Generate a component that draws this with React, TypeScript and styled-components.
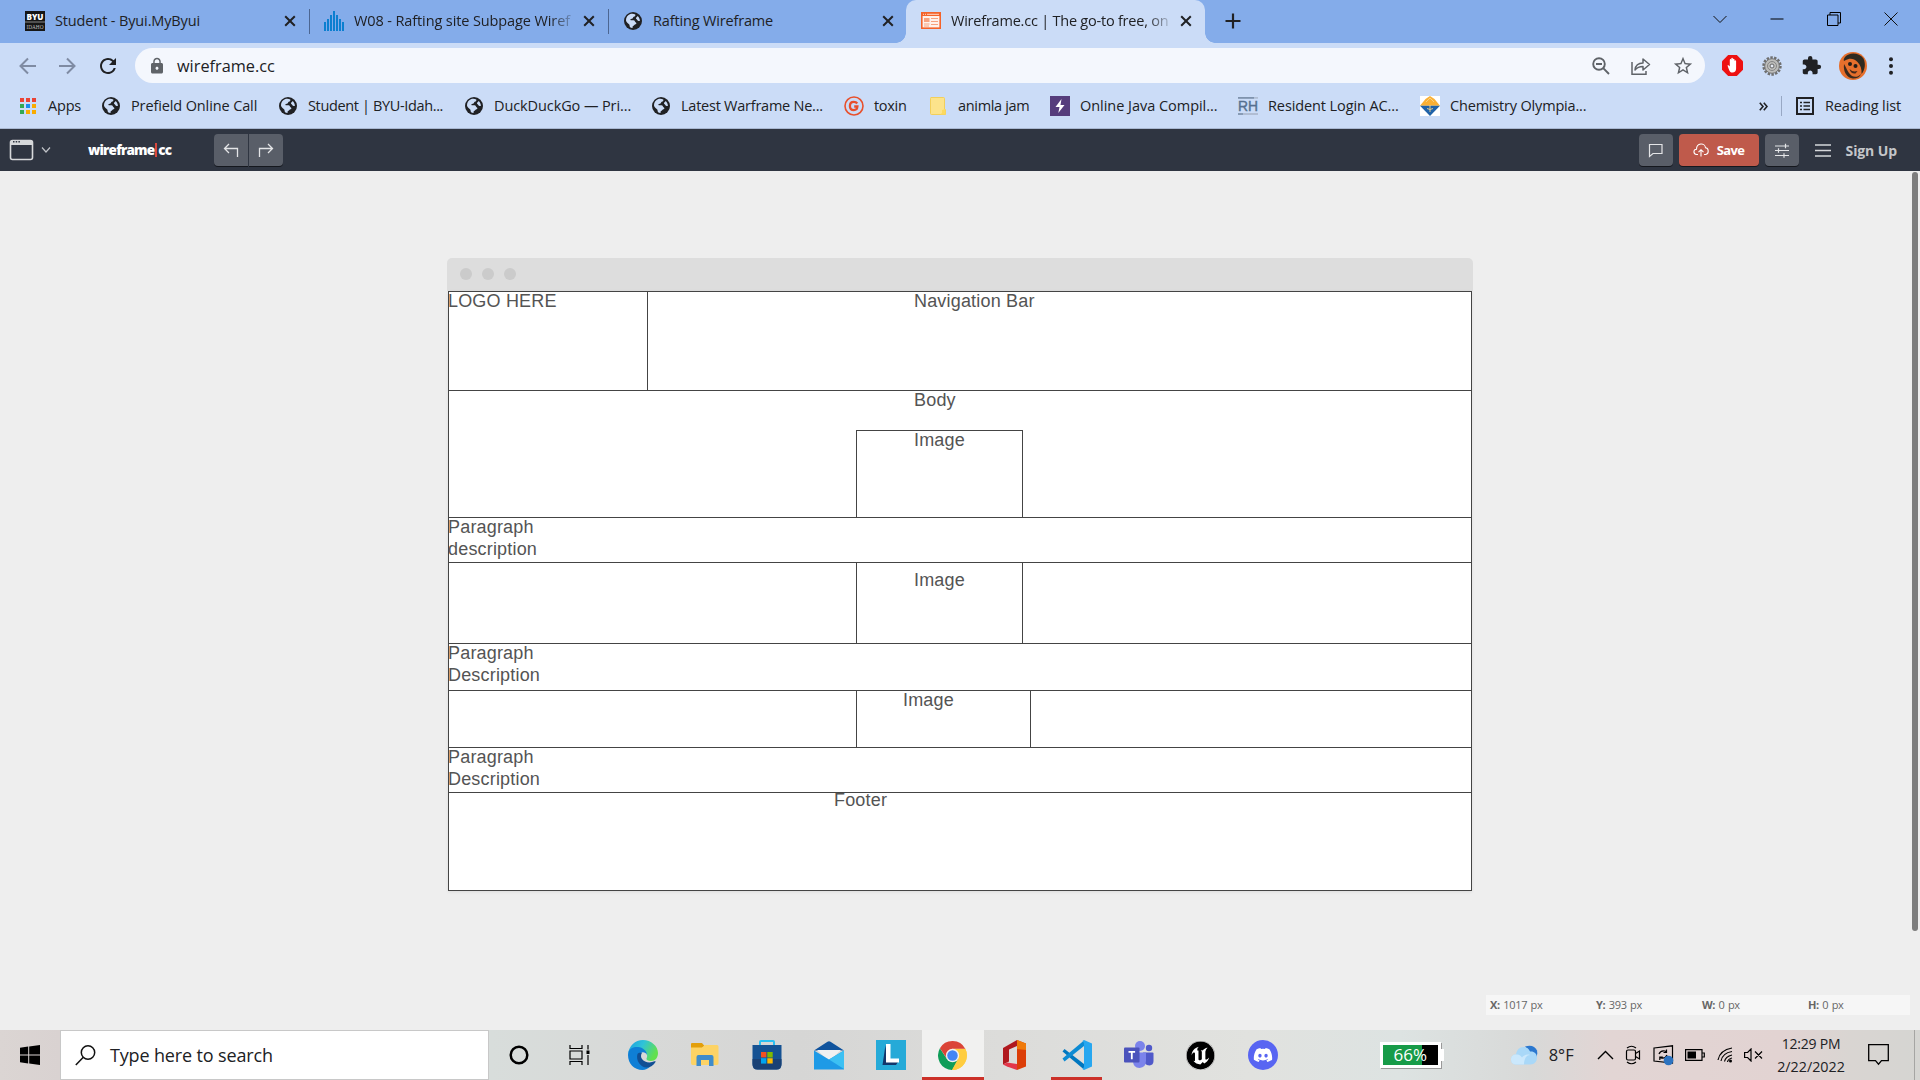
import React from "react";
import styled, { createGlobalStyle, css } from "styled-components";
import { MdLock, MdExtension, MdRefresh, MdStarBorder } from "react-icons/md";
import { SiUnrealengine } from "react-icons/si";
import { FaDiscord } from "react-icons/fa";

const uiFont = `"Open Sans", "Noto Sans", sans-serif`;
const ink = "#202124";

const GlobalStyle = createGlobalStyle`
  *, *::before, *::after { box-sizing: border-box; }
  body { margin: 0; background: #eeeeee; font-family: ${uiFont}; overflow: hidden; }
  svg { display: block; flex: none; }
`;

const Screen = styled.div`
  width: 1920px;
  height: 1080px;
  display: flex;
  flex-direction: column;
  overflow: hidden;
`;

const Label = styled.span<{ $size?: number; $track?: number }>`
  font-size: ${(p) => p.$size ?? 14.5}px;
  letter-spacing: ${(p) => p.$track ?? 0}px;
  color: ${ink};
  line-height: 20px;
  white-space: nowrap;
`;

/* ---------- Tab strip ---------- */

const TabStrip = styled.div`
  height: 43px;
  background: #84acea;
  display: flex;
  padding-left: 10px;
`;

const Tab = styled.div<{ $active?: boolean; $divider?: boolean }>`
  position: relative;
  width: 299px;
  height: 43px;
  padding: 0 12px 2px 15px;
  display: flex;
  align-items: center;
  ${(p) =>
    p.$active &&
    css`
      margin-left: -1px;
      background: #cbdcf7;
      border-radius: 10px 10px 0 0;
      &::before,
      &::after {
        content: "";
        position: absolute;
        bottom: 0;
        width: 10px;
        height: 10px;
      }
      &::before {
        left: -10px;
        background: radial-gradient(circle at 0 0, transparent 9.5px, #cbdcf7 10px);
      }
      &::after {
        right: -10px;
        background: radial-gradient(circle at 100% 0, transparent 9.5px, #cbdcf7 10px);
      }
    `}
  ${(p) =>
    p.$divider &&
    css`
      &::after {
        content: "";
        position: absolute;
        right: -1px;
        top: 9px;
        width: 1px;
        height: 25px;
        background: #4c6692;
      }
    `}
`;

const TabTitle = styled(Label)<{ $fade?: boolean }>`
  margin-left: 10px;
  width: 219px;
  ${(p) => p.$fade && css`mask-image: linear-gradient(90deg, #000 196px, rgba(0, 0, 0, 0.15) 219px);`}
`;

const TabClose = styled.div`
  margin-left: 9px;
  width: 14px;
`;

const NewTab = styled.div`
  width: 55px;
  padding: 13px 0 0 20px;
`;

const WindowControls = styled.div`
  margin-left: auto;
  display: flex;
  align-items: center;
  gap: 43px;
  padding: 0 22px 6px 0;
`;

/* ---------- Toolbar ---------- */

const Toolbar = styled.div`
  height: 45px;
  background: #cbdcf7;
  display: flex;
  align-items: center;
  padding: 0 22px 0 18px;
`;

const NavButtons = styled.div`
  display: flex;
  align-items: center;
  gap: 19px;
  width: 117px;
`;

const AddressBar = styled.div`
  width: 1570px;
  height: 35px;
  border-radius: 18px;
  background: #f4f7fd;
  display: flex;
  align-items: center;
  padding: 0 11px 0 13px;
`;

const Url = styled(Label)`
  margin-left: 11px;
  flex: 1;
`;

const AddressActions = styled.div`
  display: flex;
  align-items: center;
  gap: 21px;
`;

const Extensions = styled.div`
  display: flex;
  align-items: center;
  margin-left: 17px;
  gap: 19px;
`;

const Avatar = styled.div`
  width: 28px;
  height: 28px;
  margin-left: -2px;
`;

/* ---------- Bookmarks ---------- */

const BookmarkBar = styled.div`
  height: 41px;
  background: #cbdcf7;
  border-bottom: 1px solid #a9b8d2;
  display: flex;
  align-items: center;
  padding: 0 19px 4px 18px;
`;

const Bookmark = styled.div<{ $width: number }>`
  width: ${(p) => p.$width}px;
  display: flex;
  align-items: center;
  gap: 10px;
`;

const IconSlot = styled.div`
  width: 20px;
  height: 20px;
  display: flex;
  align-items: center;
  justify-content: center;
`;

const BarDivider = styled.div`
  width: 1px;
  height: 20px;
  margin: 0 14px 0 13px;
  background: #98a8c4;
`;

const BookmarkTail = styled.div`
  margin-left: auto;
  display: flex;
  align-items: center;
`;

const ReadingList = styled.div`
  display: flex;
  align-items: center;
  gap: 11px;
`;

/* ---------- Wireframe app header ---------- */

const AppHeader = styled.header`
  height: 42px;
  background: #2f3541;
  display: flex;
  align-items: center;
  padding: 0 23px 0 9px;
`;

const DeviceMenu = styled.div`
  display: flex;
  align-items: center;
  gap: 7px;
  width: 79px;
`;

const Brand = styled.div`
  width: 126px;
  color: #fff;
  font-size: 13.5px;
  font-weight: 800;
  letter-spacing: -0.8px;
  line-height: 20px;
  display: flex;
  align-items: center;
`;

const BrandBar = styled.i`
  width: 2px;
  height: 14px;
  margin: 0 1px;
  background: #d9483d;
`;

const ButtonPair = styled.div`
  display: flex;
  gap: 1px;
`;

const ToolButton = styled.div<{ $kind?: "left" | "right" | "save" }>`
  height: 32px;
  width: ${(p) => (p.$kind === "save" ? 80 : 34)}px;
  border-radius: ${(p) => (p.$kind === "left" ? "4px 0 0 4px" : p.$kind === "right" ? "0 4px 4px 0" : "4px")};
  background: ${(p) => (p.$kind === "save" ? "#bf5a4b" : "#595e68")};
  box-shadow: 0 1px 0 #15181e;
  display: flex;
  align-items: center;
  justify-content: center;
  gap: 8px;
  color: #fff;
  font-size: 13px;
  font-weight: 700;
  letter-spacing: -0.6px;
`;

const HeaderRight = styled.div`
  margin-left: auto;
  display: flex;
  align-items: center;
  gap: 6px;
`;

const SignUp = styled.div`
  display: flex;
  align-items: center;
  gap: 15px;
  margin-left: 10px;
  color: #c4c6c9;
  font-size: 14px;
  font-weight: 700;
  letter-spacing: -0.1px;
`;

/* ---------- Canvas ---------- */

const Canvas = styled.main`
  height: 859px;
  background: #eeeeee;
  display: flex;
  flex-direction: column;
  position: relative;
`;

const ScrollThumb = styled.div`
  position: absolute;
  right: 2px;
  top: 1px;
  width: 6px;
  height: 759px;
  border-radius: 3px;
  background: #7d7d7d;
`;

const Browser = styled.section`
  width: 1026px;
  margin: 87px 0 0 447px;
`;

const TitleBar = styled.div`
  height: 33px;
  border-radius: 5px 5px 0 0;
  background: #dddddd;
  display: flex;
  align-items: center;
  gap: 10px;
  padding: 0 0 1px 13px;
`;

const Dot = styled.i`
  width: 12px;
  height: 12px;
  border-radius: 50%;
  background: #cbcbcb;
`;

const Sheet = styled.div`
  width: 1024px;
  margin-left: 1px;
  background: #fff;
  border: 1px solid #444;
  border-bottom: 0;
  box-shadow: 0 1px 3px rgba(0, 0, 0, 0.08);
`;

const Row = styled.div<{ $height: number }>`
  height: ${(p) => p.$height}px;
  border-bottom: 1px solid #444;
  display: flex;
`;

const Cell = styled.div<{ $width?: number; $line?: boolean }>`
  ${(p) => (p.$width ? `width: ${p.$width}px;` : "flex: 1;")}
  border-right: ${(p) => (p.$line ? "1px solid #444" : "0")};
`;

const BodyArea = styled.div`
  flex: 1;
  display: flex;
  flex-direction: column;
`;

const ImageBox = styled.div`
  width: 167px;
  margin-left: 407px;
  flex: 1;
  border: 1px solid #444;
  border-bottom: 0;
`;

const Copy = styled.p<{ $indent?: number; $drop?: number }>`
  margin: ${(p) => p.$drop ?? -2}px 0 0 ${(p) => p.$indent ?? 0}px;
  font: 18px/22px "Liberation Sans", Arial, sans-serif;
  letter-spacing: 0.18px;
  color: #545454;
  white-space: nowrap;
`;

const BodyCopy = styled(Copy)`
  height: 41px;
`;

const StatusBar = styled.div`
  position: absolute;
  left: 1486px;
  bottom: 15px;
  width: 424px;
  height: 20px;
  background: #f6f6f6;
  display: grid;
  grid-template-columns: repeat(4, 106px);
  align-items: center;
  padding: 0 0 2px 4px;
  font-size: 11px;
  color: #666;
  letter-spacing: -0.3px;
  word-spacing: 0.8px;
`;

/* ---------- Taskbar ---------- */

const Taskbar = styled.footer`
  height: 50px;
  background: linear-gradient(90deg, #dbd5d3 0, #d9d2d1 60px, #d8dddb 490px, #d8d9d8 640px, #d6d6d5 800px, #dcdcda 1000px, #e1e2df 1250px, #dde3e2 1400px, #d8d9d8 1530px, #e2d5d4 1610px, #e2d3d2 1780px, #d9d5d2 1850px, #d5d5d2 1920px);
  display: flex;
  align-items: center;
`;

const StartButton = styled.div`
  width: 60px;
  padding-left: 20px;
`;

const SearchBox = styled.div`
  width: 430px;
  height: 50px;
  background: #fff;
  border: 1px solid #c8c8c8;
  display: flex;
  align-items: center;
  gap: 14px;
  padding-left: 14px;
`;

const TaskItem = styled.div<{ $active?: boolean; $running?: boolean }>`
  width: 62px;
  height: 50px;
  display: flex;
  align-items: center;
  justify-content: center;
  background: ${(p) => (p.$active ? "#f1f1f0" : "transparent")};
  ${(p) => (p.$active || p.$running) && css`
    background-image: linear-gradient(#cc3129, #cc3129);
    background-repeat: no-repeat;
    background-position: center bottom;
    background-size: ${p.$active ? 62 : 51}px 3px;
  `}
`;

const SystemItems = styled.div`
  display: flex;
  gap: 20px;
  width: 123px;
  padding-left: 19.5px;
  gap: 40px;
`;

const TaskItems = styled.div`
  display: flex;
`;

const UnrealBadge = styled.div`
  width: 29px;
  height: 29px;
  border-radius: 50%;
  background: #000;
  color: #fff;
  display: flex;
  align-items: center;
  justify-content: center;
`;

const DiscordBadge = styled(UnrealBadge)`
  width: 30px;
  height: 30px;
  background: #5865f2;
`;

const Battery = styled.div`
  margin-left: 86px;
  width: 61px;
  height: 26px;
  border: 3px solid #fff;
  background: linear-gradient(90deg, #179b48 39px, #000 39px);
  color: #fff;
  font-size: 17px;
  line-height: 20px;
  text-align: center;
  box-shadow: 1px 1px 0 #999;
`;

const BatteryCap = styled.div`
  width: 3px;
  height: 12px;
  background: #fff;
`;

const Weather = styled.div`
  display: flex;
  align-items: center;
  gap: 11px;
  width: 153px;
  padding-left: 67px;
`;

const Tray = styled.div`
  margin-left: auto;
  display: flex;
  align-items: center;
  height: 50px;
`;

const TrayIcons = styled.div`
  display: flex;
  align-items: center;
  gap: 11.5px;
`;

const Clock = styled.div`
  width: 84px;
  margin: 0 15px 0 6px;
  display: flex;
  flex-direction: column;
  align-items: center;
  gap: 3px;
`;

const ShowDesktop = styled.div`
  width: 6px;
  height: 50px;
  margin-left: 25px;
  border-left: 1px solid #a5a5a3;
`;

/* ---------- Icons ---------- */

const Cross = () => (
  <svg width="14" height="14" viewBox="0 0 14 14" stroke={ink} strokeWidth="2">
    <path d="M2.2 2.2 11.8 11.8M11.8 2.2 2.2 11.8" />
  </svg>
);

const Globe = () => (
  <IconSlot>
    <svg width="18" height="18" viewBox="0 0 18 18">
      <circle cx="9" cy="9" r="9" fill={ink} />
      <path d="M2 8c0-2.500 1.500-4.700 3.800-5.700C8 1.500 10 1.900 11.300 2.600 11.600 4 11 4.600 9.800 4.800 9 5 9.300 6 8.500 6.500 7.500 7 6.400 6.700 6.300 7.700c0 .8 1.900.5 3.200.6 1.500.2 1.300 1.700 2.400 2.200.8.400.6 1.500-.4 1.800-1 .3-1.200 1.300-2.300 1.700-.8.200-.6 1.300-.6 2-2.500-.4-3-1-3-2.500 0-1.200-1-1.400-1.800-2.300C2.800 10 2 9.400 2 8z" fill="#cbdcf7" />
      <path d="M13.500 4c1.300 1 2.300 2.700 2.400 4.700-.6.500-2.200.2-2.600-.8-.4-.9-1.500-.7-1.300-1.900.1-.8 1.200-.7 1.500-2z" fill="#cbdcf7" />
    </svg>
  </IconSlot>
);

const ByuIcon = () => (
  <svg width="20" height="20" viewBox="0 0 20 20">
    <rect width="20" height="20" fill="#161616" />
    <rect y="10.500" width="20" height="1" fill="#888" />
    <text x="10" y="8.800" fill="#fff" fontSize="8.500" fontWeight="800" textAnchor="middle" textLength="17" lengthAdjust="spacingAndGlyphs" fontFamily="Open Sans">BYU</text>
    <text x="10" y="17.500" fill="#bbb" fontSize="5.500" textAnchor="middle" textLength="17" lengthAdjust="spacingAndGlyphs" fontFamily="Liberation Serif">IDAHO</text>
  </svg>
);

const bars = [9, 12, 16, 20, 16, 12, 9];
const BarsIcon = () => (
  <svg width="20" height="20" viewBox="0 0 20 20" fill="#0b7fd0">
    {bars.map((h, i) => (
      <rect key={i} x={i * 3} y={20 - h} width="2" height={h} />
    ))}
  </svg>
);

const WireframeIcon = () => (
  <svg width="20" height="17" viewBox="0 0 20 17">
    <rect x="0.800" y="0.800" width="18.400" height="15.400" fill="#fff1ea" stroke="#f4632a" strokeWidth="1.600" />
    <rect x="1" y="1" width="18" height="3" fill="#f4632a" />
    <path d="M2 2.300h1M4 2.300h1M6 2.300h12" stroke="#ffd9c8" />
    <rect x="3" y="6" width="5.500" height="4" fill="#f6a27f" />
    <path d="M10 6.500h7M10 9.500h7M3 12h5.500M10 12.500h7M3 14h5" stroke="#f6a27f" />
  </svg>
);

const BackArrow = ({ flip }: { flip?: boolean }) => (
  <svg width="20" height="20" viewBox="0 0 20 20" fill="none" stroke="#7f8ba3" strokeWidth="2">
    <path d={flip ? "M2 10h15M10 2.500 17.500 10 10 17.500" : "M18 10H3M10 2.500 2.500 10l7.500 7.500"} />
  </svg>
);

const ZoomOut = () => (
  <svg width="18" height="18" viewBox="0 0 18 18" fill="none" stroke="#5f6368" strokeWidth="1.900">
    <circle cx="7" cy="7" r="5.800" />
    <path d="M11.200 11.200 17 17M4 7h6" />
  </svg>
);

const Share = () => (
  <svg width="20" height="18" viewBox="0 0 20 18" fill="none" stroke="#5f6368" strokeWidth="1.500">
    <path d="M1 5v12.200h14V14" />
    <path d="M4 13c.5-4.500 3.500-7 8-7V2l6.500 5.500L12 13V9.500c-3.500 0-6 1-8 3.500z" strokeLinejoin="round" />
  </svg>
);

const StopHand = () => (
  <svg width="21" height="21" viewBox="0 0 21 21">
    <path d="M6.200 0h8.600L21 6.200v8.600L14.800 21H6.200L0 14.800V6.200z" fill="#ee1111" />
    <path d="M5.500 10.500c.7-.8 1.700 0 2.300 1V5c0-1.200 1.400-1.200 1.500 0V3.600c.1-1.100 1.500-1.100 1.600 0V4.500c.1-1.100 1.500-1.100 1.600 0V6c.1-1 1.600-1 1.600 0v7.500c0 2.500-1.300 4-3.700 4-2.500 0-3.200-1.800-4.900-7z" fill="#fff" />
  </svg>
);

const GearIcon = () => (
  <svg width="20" height="20" viewBox="0 0 20 20">
    <circle cx="10" cy="10" r="8.300" fill="none" stroke="#6f6f6f" strokeWidth="2.800" strokeDasharray="2.400 1.320" />
    <circle cx="10" cy="10" r="7.300" fill="#bdbdbb" stroke="#767676" />
    <circle cx="10" cy="10" r="4.500" fill="none" stroke="#858585" />
    <circle cx="10" cy="10" r="2" fill="#e6ebf4" stroke="#666" />
  </svg>
);

const AvatarIcon = () => (
  <svg width="28" height="28" viewBox="0 0 28 28">
    <circle cx="14" cy="14" r="14" fill="#e66f2c" />
    <path d="M6 5C10 0 20 0 24.500 6.500 27 12 26 18 22.500 22c.5-5-1-9-4-12-4-4-8-4-12.500-1.500C4.500 10 4 7.500 6 5z" fill="#2f2a20" />
    <path d="M5 12c3 5 4 9 8 12 3 1.500 6 1 9-2-1 3-4 4.500-8 4.500C8 26 4 20 5 12z" fill="#3b2a1e" />
    <circle cx="11" cy="12" r="2" fill="#241d18" />
    <circle cx="16.500" cy="14" r="2" fill="#241d18" />
    <path d="M10.500 17c2.500 2.500 5 3 8 2l-2 2.500c-3 .5-5-1-6-4.500z" fill="#46281a" />
  </svg>
);

const AppsIcon = () => (
  <svg width="16" height="16" viewBox="0 0 16 16">
    {["#ea4335", "#ea4335", "#ea4335", "#34a853", "#1a8cf0", "#f9ab00", "#34a853", "#f9ab00", "#f9ab00"].map((c, i) => (
      <rect key={i} x={(i % 3) * 6} y={Math.floor(i / 3) * 6} width="4" height="4" fill={c} />
    ))}
  </svg>
);

const ToxinIcon = () => (
  <svg width="20" height="20" viewBox="0 0 20 20" fill="none" stroke="#e8502c">
    <circle cx="10" cy="10" r="9" strokeWidth="1.600" />
    <path d="M13.200 7.500C12.400 6.300 11.200 5.900 9.800 5.900c-2.300 0-3.900 1.700-3.900 4.100s1.600 4.100 4 4.100c2 0 3.300-1.200 3.500-3.600h-3.200" strokeWidth="2.300" />
  </svg>
);

const FolderBookmark = () => (
  <svg width="16" height="18" viewBox="0 0 16 18">
    <path d="M1 .5h12.500q1 0 1 1V12l1 1v4.500H1.500q-1 0-1-1v-15q0-1 .5-1z" fill="#fce38b" stroke="#f2cf5b" />
    <path d="M10 17.500l2-1.500v-3l3.500-1v5.500z" fill="#fcd95f" />
  </svg>
);

const BoltIcon = () => (
  <svg width="20" height="20" viewBox="0 0 20 20">
    <rect width="20" height="20" fill="#563d7c" />
    <path d="M11.500 3 5.500 11h4l-1.200 6 6.200-8h-4z" fill="#fff" />
  </svg>
);

const RhIcon = () => (
  <svg width="20" height="18" viewBox="0 0 20 18">
    <path d="M0 .9h16" stroke="#7f93ad" strokeWidth="1.800" />
    <path d="M16 .9h4M5 17h15" stroke="#b0bdd3" strokeWidth="1.800" />
    <path d="M0 17h5" stroke="#7f93ad" strokeWidth="1.800" />
    <text x="10" y="14" fill="#55708f" fontSize="14" fontWeight="400" stroke="#55708f" strokeWidth=".4" textAnchor="middle" textLength="20" lengthAdjust="spacingAndGlyphs" fontFamily="Liberation Sans">RH</text>
  </svg>
);

const ChemIcon = () => (
  <svg width="20" height="20" viewBox="0 0 20 20">
    <rect width="20" height="20" fill="#fff" />
    <path d="M10 0l4.500 3L20 9.800H0L5.500 3z" fill="#fbb034" />
    <path d="M0 9.800h20L10 20z" fill="#1f62a8" />
    <path d="M6 6l4-4 4 4M7 12.500l3 1 3-1M10 9v7" fill="none" stroke="#f7d58a" strokeWidth=".9" />
  </svg>
);

const ReadingIcon = () => (
  <svg width="18" height="18" viewBox="0 0 18 18" fill="none" stroke={ink}>
    <rect x="1" y="1" width="16" height="16" strokeWidth="2" />
    <path d="M4 5.500h2M4 9h2M4 12.500h2M7.500 5.500H14M7.500 9H14M7.500 12.500H14" strokeWidth="1.600" />
  </svg>
);

const DeviceIcon = () => (
  <svg width="25" height="22" viewBox="0 0 25 22">
    <rect x="1.500" y="1.500" width="22" height="19" rx="2" fill="none" stroke="#d6d8da" strokeWidth="1.600" />
    <path d="M1.500 4V3q0-2 2-2h18q2 0 2 2v3h-22z" fill="#d6d8da" />
    <path d="M4 2.800h1.500M6.700 2.800h1.500M9.400 2.800h1.500" stroke="#2f3541" strokeWidth="1.500" />
  </svg>
);

const TurnArrow = ({ flip }: { flip?: boolean }) => (
  <svg width="16" height="15" viewBox="0 0 16 15" fill="none" stroke="#e4e5e7" strokeWidth="1.300">
    <path d={flip ? "M1.500 14V5.500H14.500M10 1l4.500 4.500L10 10" : "M14.500 14V5.500H1.500M6 1 1.500 5.500 6 10"} />
  </svg>
);

const EdgeIcon = () => (
  <svg width="30" height="30" viewBox="0 0 30 30">
    <defs>
      <linearGradient id="edgeTop" x1="0" x2="1" y1="0" y2=".4">
        <stop offset="0" stopColor="#1b9de2" />
        <stop offset=".5" stopColor="#2fc3d8" />
        <stop offset="1" stopColor="#62e04f" />
      </linearGradient>
    </defs>
    <path d="M0 14C1 6 7 0 15 0s15 6 15 13c0 5-3 8-7 8-3 0-5-1-4.500-2.500C20 16 19 12 15 10 9 7 2 9 0 14z" fill="url(#edgeTop)" />
    <path d="M0 15C0 9 5 6.500 10 7c5 .4 9 4 9 8-1-2-3-3-5-2.500-3 .8-4 4.500-2 8.500 2 3.500 6 6 10 5.500-2 2-4.500 3.500-7.500 3.500C6 30 0 23.500 0 15z" fill="#0f7fd6" />
    <path d="M9.500 14c-2 6 3 13.500 9 13.500 4 0 7-2 9-5.500.5-.9-.4-1-1-.7-4 2-10 1.500-12.500-2.300C12.600 17 12.800 15 14 12.800c-2-.3-3.800-.3-4.500 1.200z" fill="#114f94" />
  </svg>
);

const ExplorerIcon = () => (
  <svg width="28" height="24" viewBox="0 0 28 24">
    <path d="M0 1q0-1 1-1h10l2.500 3L11 5H0z" fill="#e39f0b" />
    <path d="M0 4.500h11L14 2h12q1.500 0 1.500 1.500V20q0 2-1.500 2H1.500Q0 22 0 20z" fill="#fdd365" />
    <path d="M5.500 23V14q0-2 2-2h13q2 0 2 2v9H18v-6h-8v6z" fill="#3f8ccb" />
  </svg>
);

const StoreIcon = () => (
  <svg width="30" height="30" viewBox="0 0 30 30">
    <path d="M8 6V2q0-1 1-1h12q1 0 1 1v4" fill="none" stroke="#2bc0f2" strokeWidth="2" />
    <path d="M.5 5h29v19q0 5.500-5 5.500h-19q-5 0-5-5.500z" fill="#155293" />
    <path d="M.5 19h29v5q0 5.500-5 5.500h-19q-5 0-5-5.500z" fill="#194175" />
    <path d="M9 12h5.400v5.400H9z" fill="#f25022" />
    <path d="M15.300 12h5.400v5.400h-5.400z" fill="#7fba00" />
    <path d="M9 18.200h5.400v5.400H9z" fill="#00a4ef" />
    <path d="M15.300 18.200h5.400v5.400h-5.400z" fill="#ffb900" />
  </svg>
);

const MailIcon = () => (
  <svg width="30" height="29" viewBox="0 0 30 29">
    <path d="M0 9.500 13.500.8q1.500-1 3 0L30 9.500z" fill="#0f539d" />
    <path d="M3 9h24L15 20z" fill="#f1f1f1" />
    <path d="M0 9.500 15 18.500 30 9.500V28.500H0z" fill="#1e9ae6" />
    <path d="M15 18.500 30 9.500V28z" fill="#3cc0f3" />
    <path d="M4 9.300h22L15 18z" fill="#f1f1f1" />
  </svg>
);

const LIcon = () => (
  <svg width="30" height="30" viewBox="0 0 30 30">
    <rect width="30" height="30" fill="#25aad8" />
    <path d="M9.500 5 6.500 25H20l2-3H11z" fill="#12366b" />
    <path d="M10 4h4.500v14.500H23v4H10z" fill="#fff" />
  </svg>
);

const ChromeIcon = () => (
  <svg width="29" height="29" viewBox="0 0 48 48">
    <path d="M24 13h21.200A24 24 0 0 1 24 48L33.500 29.500z" fill="#ffcd40" />
    <path d="M3.200 12 14.500 29.500 24 35l-.5 13A24 24 0 0 1 3.200 12z" fill="#0f9d58" />
    <path d="M33.500 29.500 24 48h-1.500L18 34h8z" fill="#0f9d58" />
    <path d="M33.500 29.500 23 48h2A24 24 0 0 0 45.200 13H24z" fill="#ffcd40" />
    <path d="M3.200 12A24 24 0 0 1 45.200 13H24l-9.500 16z" fill="#db4437" />
    <circle cx="24" cy="24" r="11" fill="#f1f1f1" />
    <circle cx="24" cy="24" r="8.700" fill="#4285f4" />
  </svg>
);

const OfficeIcon = () => (
  <svg width="24" height="30" viewBox="0 0 24 30">
    <path d="M0 8 14 0v6L6 9.500v12l-6 3z" fill="#b0191e" />
    <path d="M0 24.500l4-2L14 24v6L4 26.500z" fill="#e3364a" />
    <path d="M14 0l9 3.500v23L14 30z" fill="#dc3e08" />
    <path d="M14 0l9 3.500V10l-9-1z" fill="#ef7a0a" />
  </svg>
);

const CodeIcon = () => (
  <svg width="30" height="30" viewBox="0 0 30 30">
    <path d="M2.500 9 22 24v5.500L.5 11.500z" fill="#0077bf" />
    <path d="M2.500 21.500 22 6V.5L.5 18.500z" fill="#0d8bd3" />
    <path d="M22 0l8 3.500v23L22 30l-1.500-1 1.500-2V3l-1.500-2z" fill="#27a7f0" />
  </svg>
);

const TeamsIcon = () => (
  <svg width="30" height="28" viewBox="0 0 30 28">
    <circle cx="16" cy="5" r="5" fill="#7b83eb" />
    <circle cx="25" cy="7" r="3.200" fill="#5059c9" />
    <path d="M19 11.500h9.500q1 0 1 1V20q0 4-4 4.500-3 0-4.500-2z" fill="#5059c9" />
    <path d="M9 11.500h13v8q0 7-6.500 7.500Q9 26.500 9 20z" fill="#7b83eb" />
    <rect y="6.500" width="15.500" height="15" rx="1" fill="#4b53bc" />
    <path d="M4.500 10.800h6.600M7.800 10.800v7.500" stroke="#fff" strokeWidth="1.800" />
  </svg>
);

const Cloud = () => (
  <svg width="27" height="20" viewBox="0 0 27 20">
    <path d="M14 1.500q9-2.500 12 4 1 5-1.500 8z" fill="#2b78cf" />
    <path d="M5.500 19.500C2 19.500 0 17.500 0 14.500c0-3 2-5 5-5C5.500 5 8.500 2 12.500 2c3 0 5.500 1.800 6.500 4.500 4-.5 7 2.200 7 6 0 4-2.500 7-6.500 7z" fill="#a9d8f8" />
    <path d="M5 9.500c3-.5 5 1 6 3 2-2.500 5-3.500 8-2.500-3 0-6 3-6 9.500H5.500C2 19.500 0 17.500 0 14.500c0-3 2-5 5-5z" fill="#cbe8fc" />
  </svg>
);

/* ---------- Content ---------- */

const bookmarks: { icon: React.ReactNode; text: string; width: number; track: number }[] = [
  { icon: <AppsIcon />, text: "Apps", width: 83, track: -0.2 },
  { icon: <Globe />, text: "Prefield Online Call", width: 177, track: -0.12 },
  { icon: <Globe />, text: "Student | BYU-Idah...", width: 186, track: -0.36 },
  { icon: <Globe />, text: "DuckDuckGo — Pri...", width: 187, track: -0.1 },
  { icon: <Globe />, text: "Latest Warframe Ne...", width: 193, track: -0.24 },
  { icon: <ToxinIcon />, text: "toxin", width: 84, track: -0.3 },
  { icon: <FolderBookmark />, text: "animla jam", width: 122, track: -0.32 },
  { icon: <BoltIcon />, text: "Online Java Compil...", width: 188, track: -0.03 },
  { icon: <RhIcon />, text: "Resident Login AC...", width: 182, track: -0.1 },
  { icon: <ChemIcon />, text: "Chemistry Olympia...", width: 180, track: -0.18 },
];

export default function App() {
  return (
    <Screen>
      <GlobalStyle />
      <TabStrip>
        <Tab $divider>
          <ByuIcon />
          <TabTitle $track={-0.13}>Student - Byui.MyByui</TabTitle>
          <TabClose><Cross /></TabClose>
        </Tab>
        <Tab $divider>
          <BarsIcon />
          <TabTitle $track={-0.11} $fade>W08 - Rafting site Subpage Wiref</TabTitle>
          <TabClose><Cross /></TabClose>
        </Tab>
        <Tab>
          <Globe />
          <TabTitle $track={-0.16}>Rafting Wireframe</TabTitle>
          <TabClose><Cross /></TabClose>
        </Tab>
        <Tab $active>
          <WireframeIcon />
          <TabTitle $track={-0.22} $fade>Wireframe.cc | The go-to free, on</TabTitle>
          <TabClose><Cross /></TabClose>
        </Tab>
        <NewTab>
          <svg width="16" height="16" viewBox="0 0 16 16" stroke={ink} strokeWidth="2.200">
            <path d="M8 .5v15M.5 8h15" />
          </svg>
        </NewTab>
        <WindowControls>
          <svg width="14" height="14" viewBox="0 0 14 14" fill="none" stroke="#111"><path d="M.5 4 7 10.500 13.500 4" /></svg>
          <svg width="14" height="14" viewBox="0 0 14 14" stroke="#000"><path d="M.5 7h13" /></svg>
          <svg width="14" height="14" viewBox="0 0 14 14" fill="none" stroke="#000"><path d="M.5 3h10.500v10.500H.5zM3 3V.5h10.500V11H11" /></svg>
          <svg width="14" height="14" viewBox="0 0 14 14" stroke="#111"><path d="M.5.5l13 13M13.500.5l-13 13" /></svg>
        </WindowControls>
      </TabStrip>

      <Toolbar>
        <NavButtons>
          <BackArrow />
          <BackArrow flip />
          <MdRefresh size={24} color={ink} />
        </NavButtons>
        <AddressBar>
          <MdLock size={18} color="#5f6368" />
          <Url $size={16.3}>wireframe.cc</Url>
          <AddressActions>
            <ZoomOut />
            <Share />
            <MdStarBorder size={22} color="#5f6368" />
          </AddressActions>
        </AddressBar>
        <Extensions>
          <StopHand />
          <GearIcon />
          <MdExtension size={21} color={ink} />
          <Avatar><AvatarIcon /></Avatar>
          <svg width="10" height="18" viewBox="0 0 10 18" fill={ink}>
            <circle cx="5" cy="2.200" r="2" /><circle cx="5" cy="9" r="2" /><circle cx="5" cy="15.800" r="2" />
          </svg>
        </Extensions>
      </Toolbar>

      <BookmarkBar>
        {bookmarks.map((b) => (
          <Bookmark key={b.text} $width={b.width}>
            <IconSlot>{b.icon}</IconSlot>
            <Label $track={b.track}>{b.text}</Label>
          </Bookmark>
        ))}
        <BookmarkTail>
          <svg width="9" height="9" viewBox="0 0 9 9" fill="none" stroke={ink} strokeWidth="1.600"><path d="M.8.800 4 4.500.8 8.200M4.800.8 8 4.500 4.800 8.200" /></svg>
          <BarDivider />
          <ReadingList>
            <ReadingIcon />
            <Label $track={-0.13}>Reading list</Label>
          </ReadingList>
        </BookmarkTail>
      </BookmarkBar>

      <AppHeader>
        <DeviceMenu>
          <DeviceIcon />
          <svg width="10" height="8" viewBox="0 0 10 8" fill="none" stroke="#c0c3c8" strokeWidth="1.200"><path d="M1 1.500l4 4.500 4-4.500" /></svg>
        </DeviceMenu>
        <Brand>wireframe<BrandBar />cc</Brand>
        <ButtonPair>
          <ToolButton $kind="left"><TurnArrow /></ToolButton>
          <ToolButton $kind="right"><TurnArrow flip /></ToolButton>
        </ButtonPair>
        <HeaderRight>
          <ToolButton>
            <svg width="15" height="15" viewBox="0 0 15 15" fill="none" stroke="#e4e5e7" strokeWidth="1.200"><path d="M1.500 1.500h12.500v9H5L1.500 13.500z" /></svg>
          </ToolButton>
          <ToolButton $kind="save">
            <svg width="16" height="14" viewBox="0 0 16 14" fill="none" stroke="#fff" strokeWidth="1.100">
              <path d="M5 11.500H3.500C0 11 .2 6.500 3.500 6.300 3.500-.5 12-.5 12.500 4.800c3.500.2 3.700 6 .2 6.700H11M8 13.500V7M5.500 9.200 8 6.700l2.500 2.500" />
            </svg>
            Save
          </ToolButton>
          <ToolButton>
            <svg width="14" height="15" viewBox="0 0 14 15" fill="none" stroke="#e4e5e7" strokeWidth="1.200"><path d="M0 3h14M0 7.500h14M0 12.500h14M10.500.8v4.400M3.500 5.300v4.400M9 10.300v4.400" /></svg>
          </ToolButton>
          <SignUp>
            <svg width="16" height="13" viewBox="0 0 16 13" stroke="#d5d7da" strokeWidth="1.400"><path d="M0 1h16M0 6.500h16M0 12h16" /></svg>
            Sign Up
          </SignUp>
        </HeaderRight>
      </AppHeader>

      <Canvas>
        <Browser>
          <TitleBar><Dot /><Dot /><Dot /></TitleBar>
          <Sheet>
            <Row $height={99}>
              <Cell $width={199} $line><Copy $indent={-1}>LOGO HERE</Copy></Cell>
              <Cell><Copy $indent={266}>Navigation Bar</Copy></Cell>
            </Row>
            <Row $height={127}>
              <BodyArea>
                <BodyCopy $indent={465}>Body</BodyCopy>
                <ImageBox><Copy $indent={57}>Image</Copy></ImageBox>
              </BodyArea>
            </Row>
            <Row $height={45}><Copy $indent={-1}>Paragraph<br />description</Copy></Row>
            <Row $height={81}>
              <Cell $width={408} $line />
              <Cell $width={166} $line><Copy $indent={57} $drop={6}>Image</Copy></Cell>
              <Cell />
            </Row>
            <Row $height={47}><Copy $indent={-1}>Paragraph<br />Description</Copy></Row>
            <Row $height={57}>
              <Cell $width={408} $line />
              <Cell $width={174} $line><Copy $indent={46}>Image</Copy></Cell>
              <Cell />
            </Row>
            <Row $height={45}><Copy $indent={-1}>Paragraph<br />Description</Copy></Row>
            <Row $height={98}><Copy $indent={385} $drop={-4}>Footer</Copy></Row>
          </Sheet>
        </Browser>
        <ScrollThumb />
        <StatusBar>
          <span><b>X:</b> 1017 px</span>
          <span><b>Y:</b> 393 px</span>
          <span><b>W:</b> 0 px</span>
          <span><b>H:</b> 0 px</span>
        </StatusBar>
      </Canvas>

      <Taskbar>
        <StartButton>
          <svg width="20" height="20" viewBox="0 0 20 20"><path d="M0 2.800 8.200 1.600V9.500H0zM9.200 1.500 20 0v9.500H9.200zM0 10.500h8.200v7.900L0 17.200zM9.200 10.500H20V20L9.200 18.500z" /></svg>
        </StartButton>
        <SearchBox>
          <svg width="21" height="21" viewBox="0 0 21 21" fill="none" stroke="#111" strokeWidth="1.500"><circle cx="13" cy="7.500" r="6.700" /><path d="M8.300 12.300.8 20" /></svg>
          <Label $size={18} $track={-0.14}>Type here to search</Label>
        </SearchBox>
        <SystemItems>
          <svg width="20" height="20" viewBox="0 0 20 20" fill="none" stroke="#000" strokeWidth="2.500"><circle cx="10" cy="10" r="8.300" /></svg>
          <svg width="21" height="20" viewBox="0 0 21 20" fill="none" stroke="#000" strokeWidth="1.200">
            <path d="M1 0v3.500h12V0M1 20v-3.500h12V20M1 6h12v8H1zM19 0v4.500M19 10v10" /><path d="M19 5.500v3.500" strokeWidth="3" />
          </svg>
        </SystemItems>
        <TaskItems>
          <TaskItem><EdgeIcon /></TaskItem>
          <TaskItem><ExplorerIcon /></TaskItem>
          <TaskItem><StoreIcon /></TaskItem>
          <TaskItem><MailIcon /></TaskItem>
          <TaskItem><LIcon /></TaskItem>
          <TaskItem $active><ChromeIcon /></TaskItem>
          <TaskItem><OfficeIcon /></TaskItem>
          <TaskItem $running><CodeIcon /></TaskItem>
          <TaskItem><TeamsIcon /></TaskItem>
          <TaskItem><UnrealBadge><SiUnrealengine size={29} /></UnrealBadge></TaskItem>
          <TaskItem><DiscordBadge><FaDiscord size={20} /></DiscordBadge></TaskItem>
        </TaskItems>
        <Battery>66%</Battery>
        <BatteryCap />
        <Weather>
          <Cloud />
          <Label $size={16.500}>8°F</Label>
        </Weather>
        <Tray>
          <TrayIcons>
            <svg width="17" height="10" viewBox="0 0 17 10" fill="none" stroke="#000" strokeWidth="1.400"><path d="M1 9l7.500-7.500L16 9" /></svg>
            <svg width="16" height="20" viewBox="0 0 16 20" fill="none" stroke="#000" strokeWidth="1.200"><rect x="1.500" y="5" width="9" height="10" rx="1.500" /><path d="M10.500 8.500 14.500 6v8l-4-2.500M2 3q4.500-3.500 9 0M2 17q4.500 3.500 9 0" /></svg>
            <svg width="21" height="21" viewBox="0 0 21 21" fill="none" stroke="#000" strokeWidth="1.200">
              <path d="M1 3 19.500.8V18L1 16zM6 9q1.500-4 6-3l1.500 1M13.500 4.500V7.500H10.500M14 10q-1.500 4-6 3l-1-1M6.800 15v-3h3" />
              <circle cx="15.500" cy="15.500" r="4.800" fill="#2c73c0" stroke="none" />
            </svg>
            <svg width="20" height="12" viewBox="0 0 20 12" fill="none" stroke="#000" strokeWidth="1.200"><path d="M.6.600H17v10.800H.6zM17 4h2.300v4H17" /><path d="M2.500 2.500H11v7H2.500z" fill="#000" stroke="none" /></svg>
            <svg width="16" height="16" viewBox="0 0 16 16" fill="none" stroke="#000" strokeWidth="1.200"><path d="M1 13Q3 3 15 1M4 14Q5.500 6 15 4.500M7.500 14.500Q8.500 9.500 15 8M10.500 15q.5-3 4.500-4" /><circle cx="13.500" cy="14" r="1.500" fill="#000" stroke="none" /></svg>
            <svg width="19" height="14" viewBox="0 0 19 14" fill="none" stroke="#000" strokeWidth="1.200"><path d="M.6 4.500h3L7 1v12L3.600 9.500h-3zM11 3.500l7 7M18 3.500l-7 7" /></svg>
          </TrayIcons>
          <Clock>
            <Label $size={14} $track={-0.2}>12:29 PM</Label>
            <Label $size={14.300}>2/22/2022</Label>
          </Clock>
          <svg width="21" height="22" viewBox="0 0 21 22" fill="none" stroke="#000" strokeWidth="1.300"><path d="M.7.700h19.600v16H13.500l-3 3.500-3-3.500H.7z" /></svg>
          <ShowDesktop />
        </Tray>
      </Taskbar>
    </Screen>
  );
}
